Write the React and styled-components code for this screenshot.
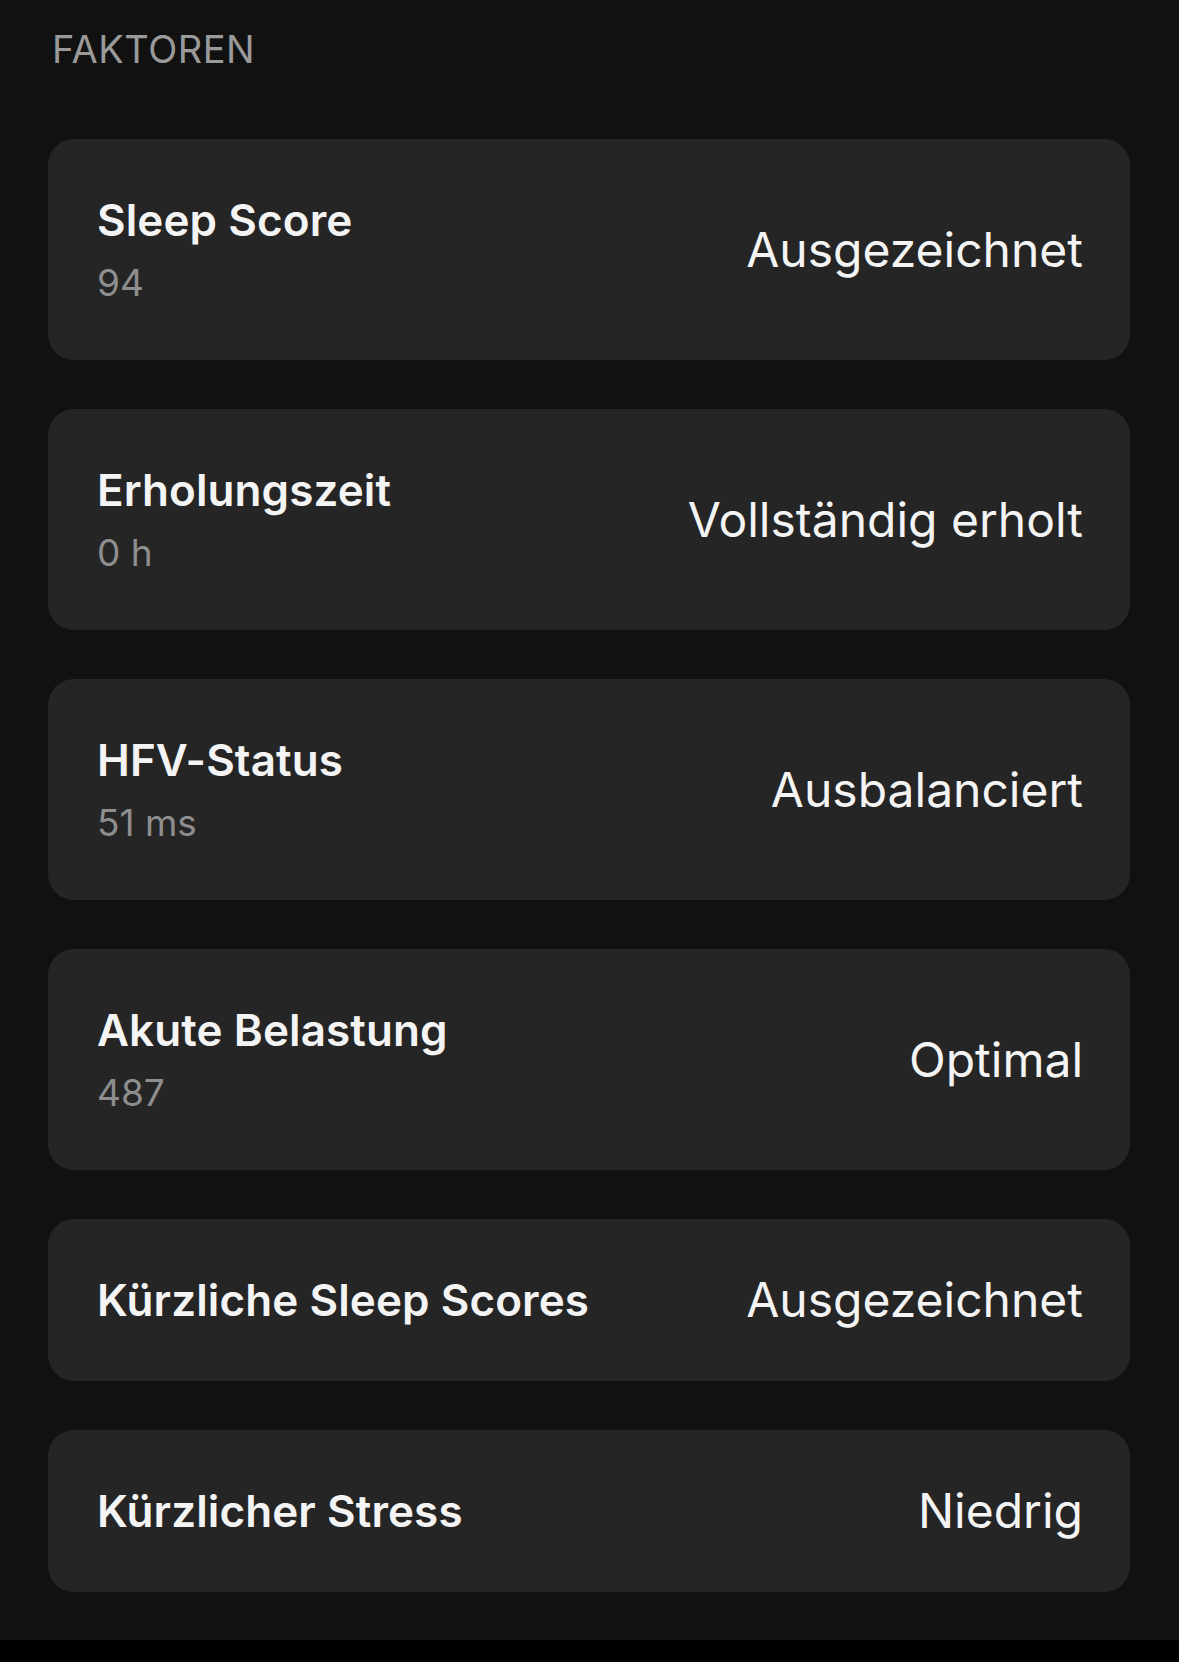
import React from 'react';
import styled, { createGlobalStyle } from 'styled-components';

const GlobalStyle = createGlobalStyle`
  html, body {
    margin: 0;
    padding: 0;
    background: #111111;
  }
  body {
    font-family: Inter, "Noto Sans", "Liberation Sans", sans-serif;
    -webkit-font-smoothing: antialiased;
  }
`;

const Page = styled.div`
  display: flex;
  flex-direction: column;
  width: 1179px;
  min-height: 1662px;
  background: #111111;
`;

const Section = styled.div`
  display: flex;
  flex-direction: column;
  padding: 26px 49px 48px 48px;
`;

const Header = styled.div`
  color: #9a9a9a;
  font-size: 38px;
  font-weight: 400;
  line-height: 46px;
  letter-spacing: 0.5px;
  margin: 0 0 67px 4px;
`;

const List = styled.div`
  display: flex;
  flex-direction: column;
  gap: 49px;
`;

const Card = styled.div`
  display: flex;
  flex-direction: row;
  align-items: center;
  justify-content: space-between;
  background: #252525;
  border-radius: 26px;
  padding: 55px 47px 55px 49px;
`;

const Labels = styled.div`
  display: flex;
  flex-direction: column;
  gap: 15px;
`;

const Title = styled.div`
  color: #f4f4f4;
  font-size: 44px;
  font-weight: 600;
  line-height: 52px;
  letter-spacing: 0.1px;
`;

const Detail = styled.div`
  color: #8e8e8e;
  font-size: 37px;
  font-weight: 400;
  line-height: 44px;
`;

const Rating = styled.div`
  color: #f4f4f4;
  font-size: 48px;
  font-weight: 400;
  line-height: 50px;
`;

const HomeBar = styled.div`
  height: 24px;
  background: #000000;
`;

const factors = [
  { title: 'Sleep Score', detail: '94', rating: 'Ausgezeichnet' },
  { title: 'Erholungszeit', detail: '0 h', rating: 'Vollständig erholt' },
  { title: 'HFV-Status', detail: '51 ms', rating: 'Ausbalanciert' },
  { title: 'Akute Belastung', detail: '487', rating: 'Optimal' },
  { title: 'Kürzliche Sleep Scores', rating: 'Ausgezeichnet' },
  { title: 'Kürzlicher Stress', rating: 'Niedrig' },
];

export default function App() {
  return (
    <Page>
      <GlobalStyle />
      <Section>
        <Header>FAKTOREN</Header>
        <List>
          {factors.map((item, index) => (
            <Card key={index}>
              <Labels>
                <Title>{item.title}</Title>
                {item.detail && <Detail>{item.detail}</Detail>}
              </Labels>
              <Rating>{item.rating}</Rating>
            </Card>
          ))}
        </List>
      </Section>
      <HomeBar />
    </Page>
  );
}
